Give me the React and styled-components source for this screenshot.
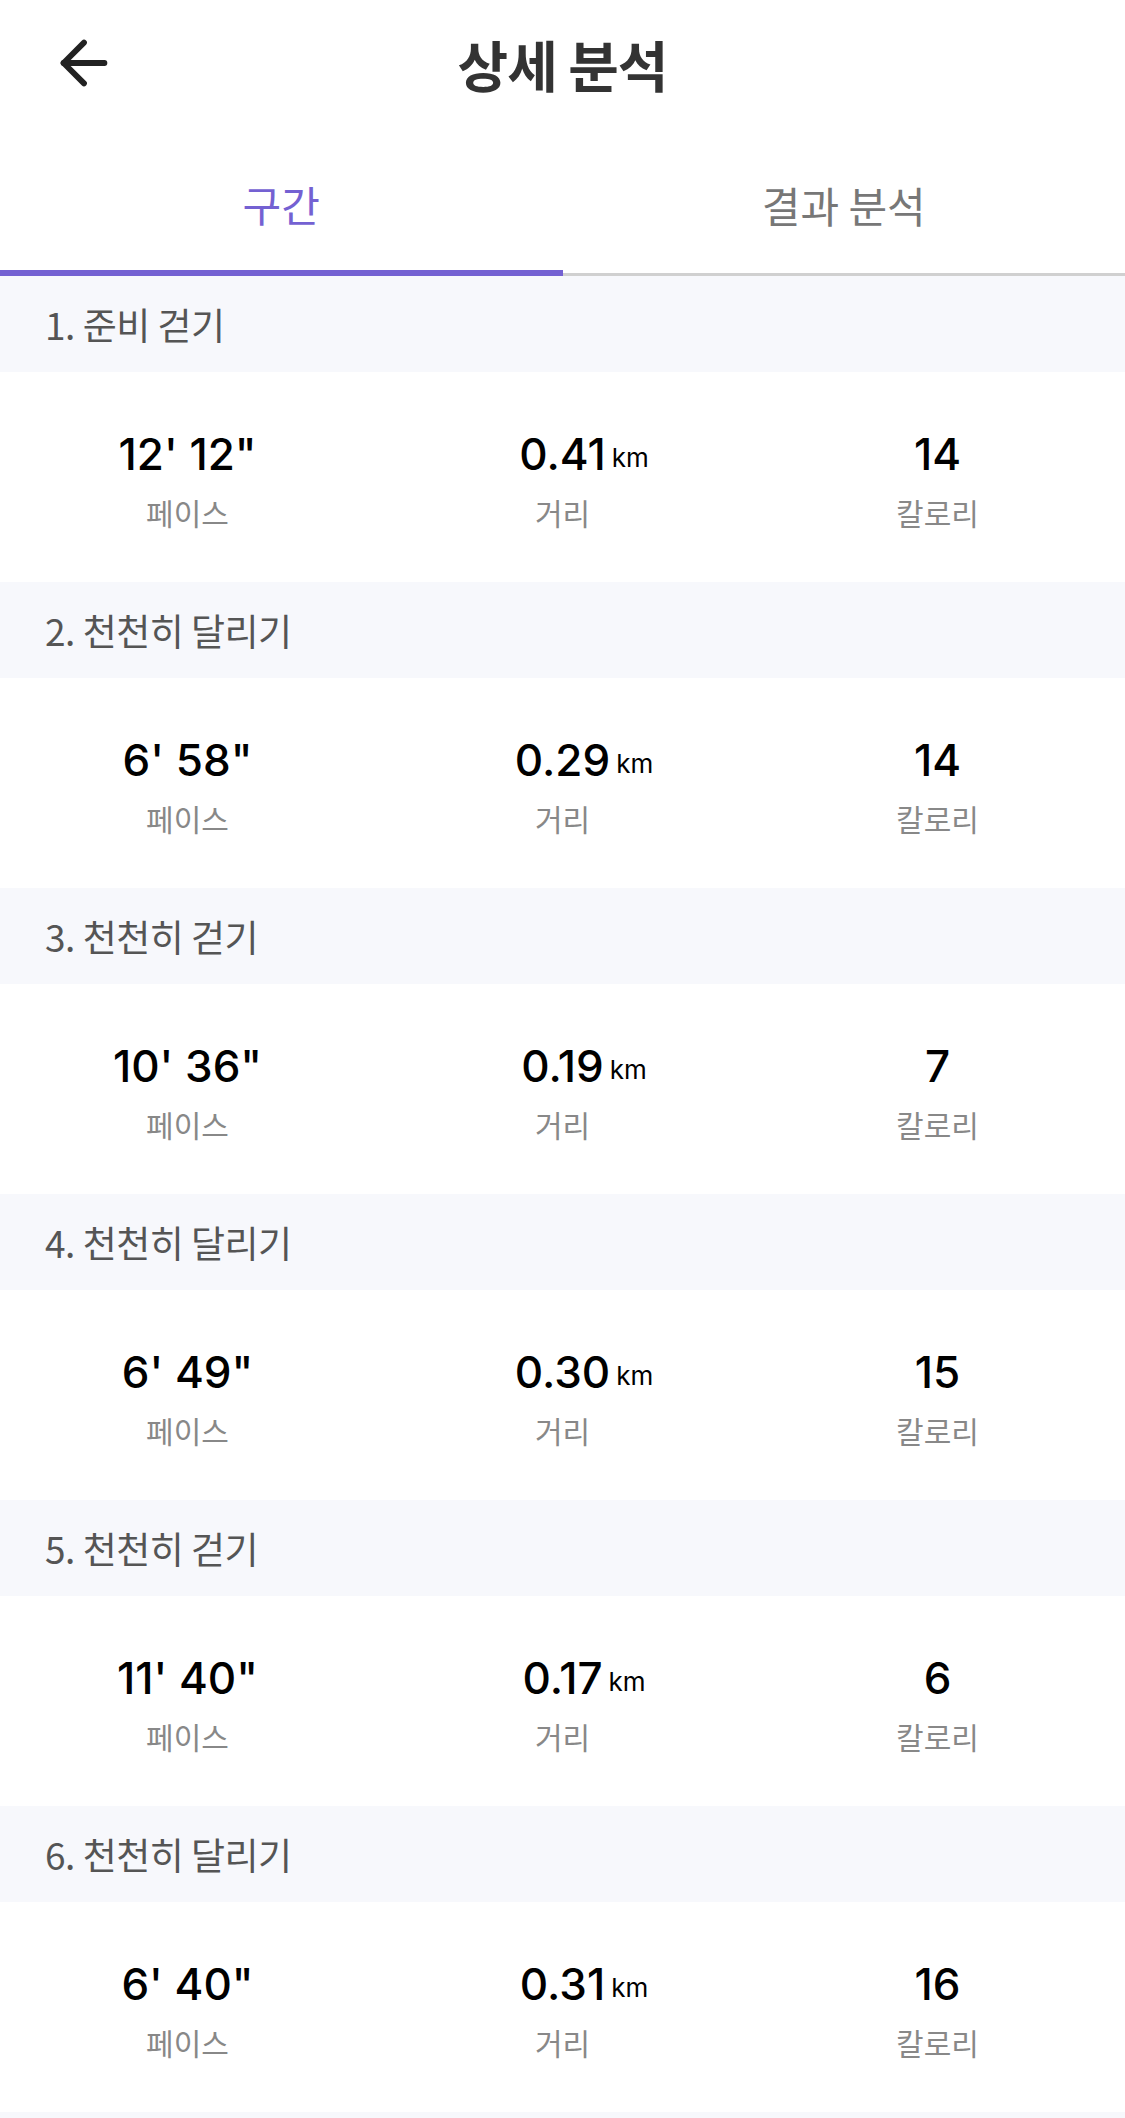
import React, { useState } from 'react';
import styled, { createGlobalStyle } from 'styled-components';
import { ArrowLeft } from 'lucide-react';

const GlobalStyle = createGlobalStyle`
    * { box-sizing: border-box; }
    body {
        margin: 0;
        background: #fff;
        font-family: "Noto Sans CJK KR", "Noto Sans", sans-serif;
    }
`;

const laps = [
    { name: '준비 걷기', pace: `12' 12"`, dist: '0.41', kcal: 14 },
    { name: '천천히 달리기', pace: `6' 58"`, dist: '0.29', kcal: 14 },
    { name: '천천히 걷기', pace: `10' 36"`, dist: '0.19', kcal: 7 },
    { name: '천천히 달리기', pace: `6' 49"`, dist: '0.30', kcal: 15 },
    { name: '천천히 걷기', pace: `11' 40"`, dist: '0.17', kcal: 6 },
    { name: '천천히 달리기', pace: `6' 40"`, dist: '0.31', kcal: 16 },
];

const App = () => {
    const [tab, setTab] = useState(0);
    return (
        <Page>
            <GlobalStyle />
            <Header>
                <BackButton aria-label="back">
                    <ArrowLeft size={70} strokeWidth={2} color="#222" />
                </BackButton>
                <Title>상세 분석</Title>
                <div />
            </Header>
            <Tabs>
                <Tab active={tab === 0} onClick={() => setTab(0)}>구간</Tab>
                <Tab active={tab === 1} onClick={() => setTab(1)}>결과 분석</Tab>
            </Tabs>
            {laps.map((lap, i) => (
                <section key={i}>
                    <LapHeader>{i + 1}. {lap.name}</LapHeader>
                    <StatRow>
                        <Stat>
                            <Value>{lap.pace}</Value>
                            <Label>페이스</Label>
                        </Stat>
                        <Stat>
                            <Value>
                                {lap.dist}
                                <Unit>km</Unit>
                            </Value>
                            <Label>거리</Label>
                        </Stat>
                        <Stat>
                            <Value>{lap.kcal}</Value>
                            <Label>칼로리</Label>
                        </Stat>
                    </StatRow>
                </section>
            ))}
            {/* next lap header peeks in below the fold */}
            <ListEnd />
        </Page>
    );
};

const Page = styled.div`
    width: 100%;
    background: #fff;
`;

const Header = styled.header`
    height: 126px;
    display: grid;
    grid-template-columns: 1fr auto 1fr;
    align-items: center;
`;

const BackButton = styled.button`
    justify-self: start;
    margin-left: 49px;
    padding: 0;
    border: none;
    background: none;
    display: flex;
    cursor: pointer;
`;

const Title = styled.h1`
    margin: 0;
    font-size: 55px;
    font-weight: 700;
    color: #333;
    letter-spacing: -1px;
`;

const Tabs = styled.nav`
    display: flex;
    align-items: flex-end;
`;

const Tab = styled.button.withConfig({ shouldForwardProp: (p) => p !== 'active' })`
    flex: 1;
    height: 150px;
    padding: 10px 0 0;
    border: none;
    background: #fff;
    border-bottom: ${(p) => (p.active ? '6px solid #7461d2' : '3px solid #d0d0d0')};
    font-family: "Noto Sans CJK KR", sans-serif;
    font-size: 42px;
    color: ${(p) => (p.active ? '#7461d2' : '#777')};
    cursor: pointer;
`;

const LapHeader = styled.div`
    height: 96px;
    background: #f7f8fc;
    display: flex;
    align-items: center;
    padding-left: 45px;
    font-size: 37px;
    letter-spacing: -0.5px;
    color: #555;
`;

const StatRow = styled.div`
    height: 210px;
    padding-top: 56px;
    display: grid;
    grid-template-columns: repeat(3, 1fr);
`;

const Stat = styled.div`
    display: flex;
    flex-direction: column;
    align-items: center;
    gap: 14px;
`;

const Value = styled.div`
    position: relative;
    font-family: Inter, "Liberation Sans", sans-serif;
    font-size: 44px;
    font-weight: 500;
    line-height: 52px;
    color: #000;
`;

const Unit = styled.span`
    position: absolute;
    left: 100%;
    bottom: 9px;
    margin-left: 6px;
    font-size: 26px;
    font-weight: 400;
    line-height: 1;
`;

const Label = styled.div`
    font-size: 30px;
    line-height: 36px;
    color: #888;
`;

const ListEnd = styled.div`
    height: 96px;
    background: #f7f8fc;
`;

export default App;
